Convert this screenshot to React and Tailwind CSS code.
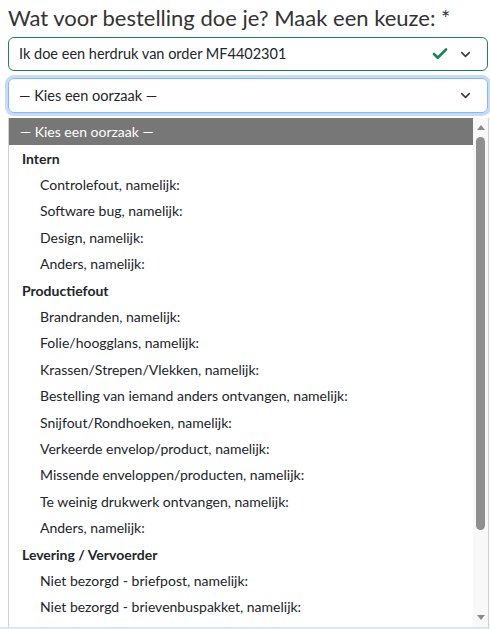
import { Check, ChevronDown } from "lucide-react";

const groups = [
  {
    label: "Intern",
    options: ["Controlefout, namelijk:", "Software bug, namelijk:", "Design, namelijk:", "Anders, namelijk:"],
  },
  {
    label: "Productiefout",
    options: [
      "Brandranden, namelijk:",
      "Folie/hoogglans, namelijk:",
      "Krassen/Strepen/Vlekken, namelijk:",
      "Bestelling van iemand anders ontvangen, namelijk:",
      "Snijfout/Rondhoeken, namelijk:",
      "Verkeerde envelop/product, namelijk:",
      "Missende enveloppen/producten, namelijk:",
      "Te weinig drukwerk ontvangen, namelijk:",
      "Anders, namelijk:",
    ],
  },
  {
    label: "Levering / Vervoerder",
    options: ["Niet bezorgd - briefpost, namelijk:", "Niet bezorgd - brievenbuspakket, namelijk:"],
  },
];

export default function App() {
  return (
    <div className="h-[629px] overflow-hidden bg-white font-['Lato',sans-serif] text-[#212529]">
      <div className="pl-[8px] pr-[2px]">
        {/* Heading */}
        <h2 className="pt-[3px] text-[22px] leading-[30px] text-[#333]">
          Wat voor bestelling doe je? Maak een keuze: *
        </h2>

        {/* Order type select */}
        <div className="mt-[4px] flex h-[34px] items-center rounded-[6px] border border-[#198754] pl-[10px] pr-[14px]">
          <span className="flex-1 text-[14.5px]">Ik doe een herdruk van order MF4402301</span>
          <Check className="mr-[9px] h-[18px] w-[18px] text-[#198754]" strokeWidth={3.5} />
          <ChevronDown className="h-[15px] w-[15px] text-[#343a40]" strokeWidth={2.5} />
        </div>

        {/* Cause select (focused) */}
        <div className="mt-[7px] flex h-[35px] items-center rounded-[6px] border border-[#86b7fe] pl-[10px] pr-[14px] shadow-[0_0_0_3px_rgba(13,110,253,0.25)]">
          <span className="flex-1 text-[14.5px]">— Kies een oorzaak —</span>
          <ChevronDown className="h-[15px] w-[15px] text-[#343a40]" strokeWidth={2.5} />
        </div>
      </div>

      {/* Native dropdown list */}
      <div className="ml-[8px] mr-[1px] mt-[5px] flex h-[509px] border-l border-r border-[#d0d0d0] bg-white">
        <div className="flex-1 overflow-hidden text-[14px]">
          <div className="flex h-[27px] items-center bg-[#777777] pl-[11px] text-white">
            — Kies een oorzaak —
          </div>
          {groups.map((g) => (
            <div key={g.label}>
              <div className="flex h-[26.4px] items-center pl-[13px] font-bold">{g.label}</div>
              {g.options.map((o) => (
                <div key={o} className="flex h-[26.4px] items-center pl-[31px]">
                  {o}
                </div>
              ))}
            </div>
          ))}
        </div>

        {/* Scrollbar */}
        <div className="flex w-[15px] flex-col items-center bg-[#f8f8f8]">
          <div className="mt-[7px] h-0 w-0 border-x-[4px] border-b-[5px] border-x-transparent border-b-[#8a8a8a]" />
          <div className="mt-[7px] h-[393px] w-[9px] rounded-full bg-[#8f8f8f]" />
          <div className="flex-1" />
          <div className="mb-[7px] h-0 w-0 border-x-[4px] border-t-[5px] border-x-transparent border-t-[#8a8a8a]" />
        </div>
      </div>
      <div className="h-[4px] bg-[#d6eaf2]" />
    </div>
  );
}
